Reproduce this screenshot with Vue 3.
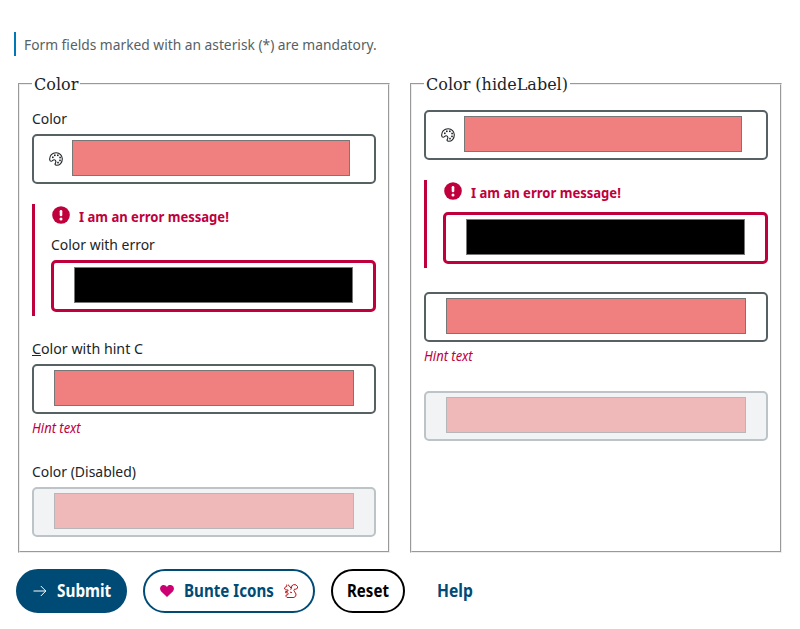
<script setup>
const groups = [
  { legend: 'Color', hideLabel: false },
  { legend: 'Color (hideLabel)', hideLabel: true },
]
</script>

<template>
  <main class="page">
    <p class="notice"><span class="cond">Form fields marked with an asterisk (*) are mandatory.</span></p>

    <div class="groups">
      <fieldset v-for="g in groups" :key="g.legend">
        <legend>{{ g.legend }}</legend>

        <div class="item">
          <div v-if="!g.hideLabel" class="label"><span class="cond">Color</span></div>
          <div class="box with-icon">
            <svg class="palette" viewBox="0 0 14 14">
              <path d="M.7 7.800C.3 3.600 3.300.7 7.200.7a6.200 6.200 0 0 1 6.100 6.400c0 3.600-2.600 6.200-5.600 6.200-1.700 0-2-1.100-1.300-2.200.9-1.500.3-3.200-1.200-3.300-1.500-.1-1.800 1.500-3.100 1.400C1.200 9.200.8 8.700.7 7.800Z" />
              <g class="dots">
                <rect x="3" y="4.500" width="1.600" height="1.600" />
                <rect x="5" y="2.500" width="1.600" height="1.600" />
                <rect x="8" y="2.500" width="1.600" height="1.600" />
                <rect x="10.300" y="4.700" width="1.600" height="1.600" />
                <rect x="10.200" y="7.600" width="1.600" height="1.600" />
                <rect x="8.200" y="9.800" width="1.600" height="1.600" />
              </g>
            </svg>
            <div class="swatch coral"></div>
          </div>
        </div>

        <div class="item error">
          <div class="message">
            <svg class="alert" viewBox="0 0 18 18">
              <circle cx="9" cy="9" r="8.800" />
              <rect x="7.700" y="4" width="2.600" height="6.300" rx="1.200" />
              <circle class="dot" cx="9" cy="12.900" r="1.500" />
            </svg>
            <span class="cond">I am an error message!</span>
          </div>
          <div v-if="!g.hideLabel" class="label"><span class="cond">Color with error</span></div>
          <div class="box"><div class="swatch black"></div></div>
        </div>

        <div class="item hinted">
          <div v-if="!g.hideLabel" class="label"><span class="cond"><u>C</u>olor with hint C</span></div>
          <div class="box"><div class="swatch coral"></div></div>
          <div class="hint"><span class="cond">Hint text</span></div>
        </div>

        <div class="item">
          <div v-if="!g.hideLabel" class="label"><span class="cond">Color (Disabled)</span></div>
          <div class="box disabled"><div class="swatch faded"></div></div>
        </div>
      </fieldset>
    </div>

    <div class="actions">
      <button class="btn submit">
        <svg class="arrow" viewBox="0 0 14 14"><path d="M.5 7h12.300M7.800 2l5 5-5 5" /></svg>
        <span class="cond">Submit</span>
      </button>
      <button class="btn bunte">
        <svg class="heart" viewBox="0 0 14 12"><path d="M7 12 1.200 6.400C-.7 4.300-.1 1.400 1.900.4 3.900-.5 6 .3 7 2 8-.3 10.100-.5 12.100.4c2 1 2.600 3.900.7 6Z" /></svg>
        <span class="cond">Bunte Icons</span>
        <svg class="squirrel" viewBox="0 0 14 14">
          <path d="M2.600.6 3 2 .8 3.500.6 5l1.200.9 2.400.1-.8 1.500H1.600v1.300h2.200l.4.900-.6 1.200-1.600.2v1.200l1 1.200h6.900l1.800-1.300.3-2.200-1.300-2.100-.8-1.400.6-1.400 1.400.1 1.600-1V2.500L12 .9 9.800.6 7.800 1.800l-.4 2.400L6.700 5.800M4.400.6l.3 1.200 1.500.9.600 1.500M6 8.200l2 .3" />
        </svg>
      </button>
      <button class="btn reset"><span class="cond">Reset</span></button>
      <button class="btn help"><span class="cond">Help</span></button>
    </div>
  </main>
</template>

<style>
body {
  margin: 0;
  background: #fff;
}
</style>

<style scoped>
.page {
  box-sizing: border-box;
  width: 800px;
  height: 629px;
  padding: 32px 16px 0;
  font: 15px/18px "Noto Sans", sans-serif;
  color: #202427;
}
.cond {
  display: block;
  white-space: nowrap;
  transform: scaleX(0.9);
  transform-origin: left;
}
.notice {
  margin: 0 0 0 -2px;
  padding-left: 8px;
  border-left: 2px solid #0077b6;
  line-height: 25px;
  height: 24px;
  color: #576164;
}
.notice .cond { transform: scaleX(0.918); }
.groups {
  display: grid;
  grid-template-columns: 376px 376px;
  gap: 16px;
  margin-top: 17px;
}
fieldset {
  margin: 0 2px;
  padding: 15px 12px 14px;
  border: 2px groove #ededed;
  min-width: 0;
}
legend {
  padding: 2px 2px 0;
  font: 16px/20px "DejaVu Serif", serif;
}
.item {
  margin-bottom: 20px;
}
.item:last-child {
  margin-bottom: 0;
}
.label {
  height: 24px;
  line-height: 16px;
}
.label .cond { transform: scaleX(0.93); }
.hinted .label .cond { transform: scaleX(0.948); }
.box {
  box-sizing: border-box;
  height: 50px;
  padding: 4px 20px 6px;
  border: 2px solid #576164;
  border-radius: 5px;
  display: flex;
}
.with-icon {
  padding: 4px 24px 6px 15px;
}
.swatch {
  box-sizing: border-box;
  flex: 1;
  height: 36px;
  border: 1px solid #777;
}
.coral { background: #f08080; }
.black { background: #000; }
.faded {
  background: #efb9b9;
  border-color: #b5b7b9;
}
.disabled {
  background: #f1f3f5;
  border-color: #bcc4c8;
}
.palette {
  width: 14px;
  height: 14px;
  margin: 12px 9px 0 0;
  fill: none;
  stroke: #202427;
  stroke-width: 1.100;
}
.dots {
  fill: #202427;
  stroke: none;
}
.error {
  padding: 0 0 4px 16px;
  border-left: 3px solid #c0003c;
  margin-bottom: 24px;
}
.error .box {
  height: 52px;
  border: 3px solid #c0003c;
}
.message {
  display: flex;
  height: 32px;
  gap: 9px;
  padding: 2px 0 0 1px;
  box-sizing: border-box;
  color: #c0003c;
  font-weight: 700;
  line-height: 20px;
}
.message .cond { transform: scaleX(0.87); }
.alert {
  width: 18px;
  height: 18px;
  fill: #c0003c;
}
.alert rect,
.alert .dot {
  fill: #fff;
}
.hint {
  height: 29px;
  padding-top: 5px;
  box-sizing: border-box;
  color: #c0003c;
  font-size: 13.500px;
  font-style: italic;
}
.hint .cond { transform: scaleX(0.96); }
.actions {
  display: flex;
  gap: 16px;
  margin-top: 16px;
}
.btn {
  box-sizing: border-box;
  display: flex;
  align-items: center;
  height: 44px;
  padding: 0 15px;
  border: 2px solid #004b76;
  border-radius: 22px;
  background: #fff;
  color: #004b76;
  font: 700 17px/22px "Noto Sans", sans-serif;
}
.btn .cond { flex: none; }
.submit {
  width: 111px;
  background: #004b76;
  color: #fff;
}
.bunte { width: 172px; }
.bunte .cond { transform: scaleX(0.89); }
.reset {
  width: 74px;
  padding: 0 14px;
  border-color: #000;
  color: #000;
}
.reset .cond { transform: scaleX(0.885); }
.help { border-color: transparent; padding: 0 14px; }
.help .cond { transform: scaleX(0.92); }
.arrow {
  flex: none;
  width: 14px;
  height: 14px;
  margin-right: 10px;
  fill: none;
  stroke: #fff;
  stroke-width: 1;
}
.heart {
  flex: none;
  width: 14px;
  height: 12px;
  margin-right: 10px;
  fill: #cd0073;
}
.squirrel {
  flex: none;
  width: 14px;
  height: 14px;
  margin-left: -1px;
  fill: none;
  stroke: #c0141b;
  stroke-width: 1;
}
</style>
